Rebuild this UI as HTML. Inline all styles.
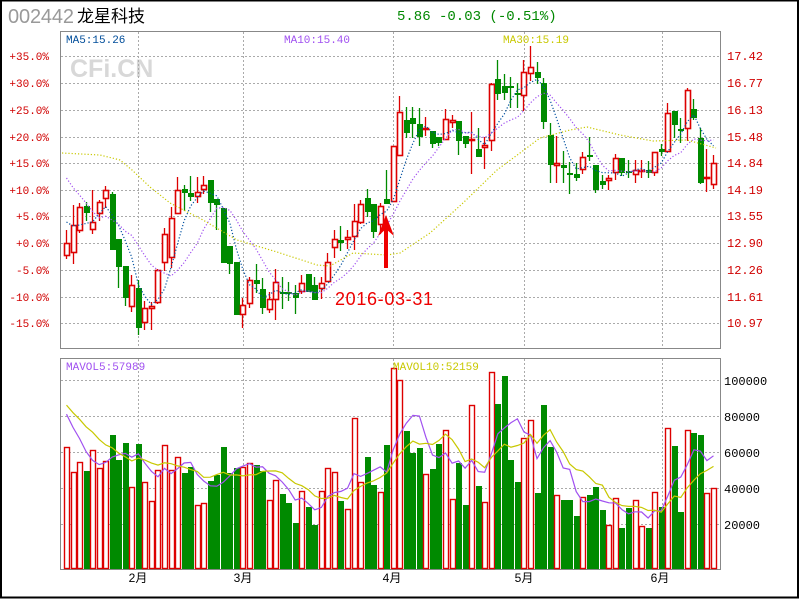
<!DOCTYPE html>
<html><head><meta charset="utf-8"><style>
html,body{margin:0;padding:0;background:#fff}
#w{position:relative;width:800px;height:600px;overflow:hidden;background:#fff}
svg{position:absolute;left:0;top:0}
</style></head><body><div id="w">
<svg id="s" width="800" height="600" xmlns="http://www.w3.org/2000/svg" font-family="Liberation Mono, monospace">
<rect x="1" y="0.5" width="797" height="597" fill="none" stroke="#000" stroke-width="2"/>
<text x="8" y="23" font-family="Liberation Sans, sans-serif" font-size="20" fill="#999" textLength="66" lengthAdjust="spacing">002442</text>
<text x="77" y="22" font-family="Liberation Sans, 'Noto Sans CJK SC', sans-serif" font-size="17" fill="#000">龙星科技</text>
<text x="397" y="20" font-size="14" fill="#008800">5.86 -0.03 (-0.51%)</text>
<text x="70" y="77" font-family="Liberation Sans, sans-serif" font-weight="bold" font-size="25" fill="#d8d8d8">CFi.CN</text>
<g id="grid"></g>
<rect x="60.5" y="31.5" width="660" height="317" fill="none" stroke="#888"/>
<rect x="60.5" y="358.5" width="660" height="211" fill="none" stroke="#888"/>
<g id="vol"></g>
<g id="cand"></g>
<g id="ma"></g>
<text x="66" y="43" font-size="11" fill="#004d9a">MA5:15.26</text>
<text x="284" y="43" font-size="11" fill="#a050f0">MA10:15.40</text>
<text x="503" y="43" font-size="11" fill="#c8c800">MA30:15.19</text>
<text x="66" y="370" font-size="11" fill="#a050f0">MAVOL5:57989</text>
<text x="393" y="370" font-size="11" fill="#c8c800">MAVOL10:52159</text>
<g font-size="11" fill="#d00000" text-anchor="end" id="ll"></g>
<g font-size="12" fill="#d00000" id="rl"></g>
<g font-size="12" fill="#000" id="vl"></g>
<g font-family="Liberation Sans, 'Noto Sans CJK SC', sans-serif" font-size="12" fill="#000" text-anchor="middle">
<text x="138" y="582">2月</text><text x="243" y="582">3月</text><text x="392" y="582">4月</text><text x="524" y="582">5月</text><text x="660" y="582">6月</text>
</g>
<rect x="384" y="228" width="4" height="40" fill="#e00"/>
<polygon points="386,215 394,236 386,229 378,236" fill="#e00"/>
<text x="335" y="305" font-family="Liberation Sans, sans-serif" font-size="18" fill="#e00" textLength="98" lengthAdjust="spacing">2016-03-31</text>
</svg>
</div>
<script>
var NS="http://www.w3.org/2000/svg";
function el(p,t,a){var e=document.createElementNS(NS,t);for(var k in a)e.setAttribute(k,a[k]);document.getElementById(p).appendChild(e);return e;}
function tx(p,x,y,s){var e=el(p,"text",{x:x,y:y});e.textContent=s;}
var py=[56,83,110,137,163,190,216,243,270,297,323];
var pl=["+35.0%","+30.0%","+25.0%","+20.0%","+15.0%","+10.0%","+5.0%","+0.0%","-5.0%","-10.0%","-15.0%"];
var pr=["17.42","16.77","16.13","15.48","14.84","14.19","13.55","12.90","12.26","11.61","10.97"];
py.forEach(function(y,i){el("grid","line",{x1:61,x2:720,y1:y+.5,y2:y+.5,stroke:"#aaa","stroke-dasharray":"2 2"});tx("ll",49,y+4,pl[i]);tx("rl",727,y+4,pr[i]);});
var vy=[380,416,452,488,524],vl=["100000","80000","60000","40000","20000"];
vy.forEach(function(y,i){el("grid","line",{x1:61,x2:720,y1:y+.5,y2:y+.5,stroke:"#aaa","stroke-dasharray":"2 2"});tx("vl",724,y+5,vl[i]);});
[138,243,393,524,662].forEach(function(x){el("grid","line",{x1:x+.5,x2:x+.5,y1:32,y2:348,stroke:"#aaa","stroke-dasharray":"2 2"});el("grid","line",{x1:x+.5,x2:x+.5,y1:359,y2:569,stroke:"#aaa","stroke-dasharray":"2 2"});});
var C=[[243,255,230,258,1],[225,252,205,263,1],[207,230,203,232,1],[206,212,202,220,0],[222,229,190,233,1],[202,213,200,220,1],[190,198,186,207,1],[194,249,192,249,0],[239,266,239,287,0],[266,297,266,305,0],
[285,306,275,311,1],[288,327,280,334,0],[308,322,301,329,1],[306,308,302,329,1],[270,302,269,303,1],[234,262,228,270,1],[218,257,207,267,1],[190,213,177,213,1],[189,192,185,210,0],[193,196,176,200,0],
[192,196,177,202,1],[185,189,176,193,1],[180,202,180,211,0],[199,204,199,229,0],[208,262,208,262,0],[246,263,246,273,0],[262,314,262,314,0],[305,314,298,327,1],[280,303,277,307,1],[280,283,264,292,0],
[289,307,278,313,0],[299,309,292,312,1],[282,299,269,319,1],[292,293,277,308,0],[292,293,282,300,0],[293,297,285,313,0],[283,291,275,293,1],[274,291,274,291,0],[285,299,277,299,0],[283,288,277,298,1],
[262,281,253,281,1],[239,247,230,257,1],[240,242,226,250,0],[237,239,230,248,1],[221,236,204,249,1],[204,222,200,223,1],[198,211,189,216,0],[204,231,204,237,0],[206,224,203,233,1],[199,203,170,203,0],
[146,201,146,201,1],[112,155,96,155,1],[120,132,107,137,0],[118,123,107,137,0],[124,136,108,145,0],[128,129,117,135,1],[131,143,131,147,0],[137,142,137,145,0],[119,139,109,139,1],[120,122,115,127,1],
[121,140,121,154,0],[136,143,136,147,0],[139,140,112,173,1],[149,156,128,156,0],[145,147,137,168,1],[84,140,83,150,1],[79,93,60,99,0],[86,92,74,99,0],[86,87,77,107,0],[93,94,83,107,0],
[72,95,60,110,1],[67,73,46,80,1],[72,77,62,83,0],[83,121,78,128,0],[135,164,123,182,0],[163,165,136,182,1],[165,167,151,182,0],[173,174,162,193,0],[174,177,163,180,0],[157,169,152,173,1],
[155,156,137,160,0],[165,189,165,192,0],[181,184,175,188,0],[178,180,175,189,1],[158,172,154,179,1],[158,172,158,175,0],[171,172,160,177,0],[170,174,160,182,1],[170,171,160,177,1],[170,172,161,177,0],
[152,172,152,175,1],[149,151,144,155,0],[113,151,103,151,1],[111,124,111,137,0],[129,130,118,142,0],[90,128,88,140,1],[109,117,99,119,0],[138,182,128,183,0],[177,177,149,191,1],[163,184,155,188,1]];
var V=[447,472,462,471,450,468,461,435,460,443,487,444,482,501,470,445,470,457,473,467,505,503,481,475,447,473,468,467,463,465,471,500,480,494,503,523,491,507,525,491,468,472,501,509,418,482,457,485,492,445,368,380,431,453,448,474,469,444,430,499,463,505,405,486,502,372,404,376,460,482,438,420,493,405,447,495,500,500,516,497,495,487,510,525,498,528,508,500,526,528,492,507,428,446,512,430,433,435,493,488];
var R="#dd0000",G="#008a00";
function X(i){return 64+6.535*i;}
C.forEach(function(c,i){var l=X(i),cx=Math.round(l+2)+.5,col=c[4]?R:G;
 el("cand","line",{x1:cx,x2:cx,y1:c[2],y2:c[3]+1,stroke:col,"stroke-width":1.3});
 var h=Math.max(c[1]-c[0],1);
 if(c[4])el("cand","rect",{x:Math.round(l)+.5,y:c[0]+.5,width:5,height:h,fill:"#fff",stroke:col,"stroke-width":1.6});
 else el("cand","rect",{x:Math.round(l),y:c[0],width:6,height:h+1,fill:col});
 var t=V[i];
 if(c[4])el("vol","rect",{x:Math.round(l)+.5,y:t+.5,width:5,height:568-t,fill:"#fff",stroke:col,"stroke-width":1.4});
 else el("vol","rect",{x:Math.round(l),y:t,width:6,height:569-t,fill:col});
});
function ma(arr,pad,n){var a=pad.concat(arr),out=[];for(var i=0;i<arr.length;i++){var s=0;for(var k=0;k<n;k++)s+=a[pad.length+i-k];out.push(s/n);}return out;}
var cl=C.map(function(c){return c[4]?c[0]:c[1];});
var pad=[130,130,134,136,140,205,212,220,230];
function pl2(vals,col,dash,w){var p=vals.map(function(v,i){return (X(i)+2.5).toFixed(1)+","+v.toFixed(1);}).join(" ");var a={points:p,fill:"none",stroke:col,"stroke-width":w||1.2};if(dash)a["stroke-dasharray"]=dash;el("ma","polyline",a);}
pl2(ma(cl,pad,5),"#0050a0","1.2 2");
pl2(ma(cl,pad,10),"#a050f0","1.2 2");
el("ma","polyline",{points:"62,153 100,155 120,160 132,170 150,187 170,203 203,220 237,240 277,252 317,265 330,266 353,253 370,254 387,255 400,253 430,233 463,203 497,170 520,153 540,138 570,130 587,127 620,135 653,141 687,140 716,148",fill:"none",stroke:"#c8c800","stroke-width":1.2,"stroke-dasharray":"1.2 2"});
var vp=[396,396,396,396,396,406,406,406,406];
pl2(ma(V,vp,5),"#a050f0",null,1.2);
pl2(ma(V,vp,10),"#c8c800",null,1.2);
</script>
</body></html>
